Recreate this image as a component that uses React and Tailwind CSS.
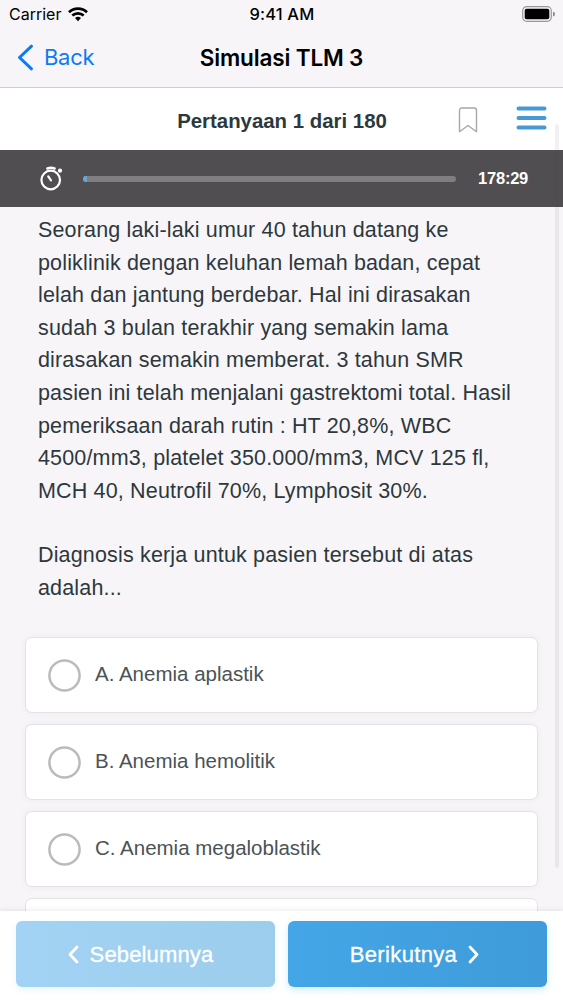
const paragraphs = [
  [
    'Seorang laki-laki umur 40 tahun datang ke',
    'poliklinik dengan keluhan lemah badan, cepat',
    'lelah dan jantung berdebar. Hal ini dirasakan',
    'sudah 3 bulan terakhir yang semakin lama',
    'dirasakan semakin memberat. 3 tahun SMR',
    'pasien ini telah menjalani gastrektomi total. Hasil',
    'pemeriksaan darah rutin : HT 20,8%, WBC',
    '4500/mm3, platelet 350.000/mm3, MCV 125 fl,',
    'MCH 40, Neutrofil 70%, Lymphosit 30%.',
  ],
  ['Diagnosis kerja untuk pasien tersebut di atas', 'adalah...'],
];

const options = ['A. Anemia aplastik', 'B. Anemia hemolitik', 'C. Anemia megaloblastik'];

function StatusBar() {
  return (
    <div className="grid h-7 grid-cols-3 items-center pl-[9px] pr-[8px] font-['Inter',sans-serif] text-[16px] text-black">
      <div className="flex items-center gap-[7px]">
        <span>Carrier</span>
        <svg width="20" height="15" viewBox="0 0 20 15" fill="none" stroke="#000" strokeWidth="2.7">
          <path d="M1 5.2C6 .3 14 .3 19 5.2" />
          <path d="M4.3 8.6C7.5 5.6 12.5 5.6 15.7 8.6" />
          <path d="M7 11.1Q10 8.5 13 11.1L10 14.2Z" fill="#000" stroke="none" />
        </svg>
      </div>
      <span className="text-center text-[16.5px] font-medium tracking-[0.150px]">9:41 AM</span>
      <svg className="justify-self-end" width="33" height="16" viewBox="0 0 33 16">
        <rect x=".7" y=".7" width="28.6" height="14.6" rx="4" fill="none" stroke="#999" strokeWidth="1.2" />
        <rect x="2.7" y="2.7" width="24.6" height="10.6" rx="2" fill="#000" />
        <path d="M31 5.5Q33 6 33 8T31 10.5Z" fill="#888" />
      </svg>
    </div>
  );
}

function NavBar() {
  return (
    <div className="grid h-[59px] grid-cols-[1fr_auto_1fr] items-center px-[17px] font-['Inter',sans-serif] text-[22px]">
      <div className="flex items-center gap-[10px] text-[#0b7bf3]">
        <svg width="17" height="27" viewBox="0 0 17 27" fill="none" stroke="currentColor" strokeWidth="3" strokeLinecap="round" strokeLinejoin="round">
          <path d="M14.5 2.2L2.5 13.5L14.5 24.8" />
        </svg>
        <span className="tracking-[-0.3px]">Back</span>
      </div>
      <h1 className="text-[22.500px] font-semibold tracking-[-0.150px] text-black">Simulasi TLM 3</h1>
      <span />
    </div>
  );
}

function QuestionHeader() {
  return (
    <div className="grid h-[62px] shrink-0 grid-cols-[1fr_auto_1fr] items-center bg-white pl-[17px] pr-[16px]">
      <span />
      <h2 className="pt-[5px] text-[20.400px] font-bold text-[#2b393d]">Pertanyaan 1 dari 180</h2>
      <div className="flex items-center justify-end gap-[38px] pb-[2px]">
        <svg className="mt-[3px]" width="20" height="26" viewBox="0 0 20 26" fill="none" stroke="#a3a8ab" strokeWidth="1.4" strokeLinejoin="round">
          <path d="M1.500 3.500Q1.500 1 4 1H16Q18.500 1 18.500 3.500V24.700L10 18.500L1.500 24.700Z" />
        </svg>
        <svg width="31" height="24" viewBox="0 0 31 24" stroke="#4799d4" strokeWidth="4" strokeLinecap="round">
          <path d="M2.500 2.500H28.500M2.500 12H28.500M2.500 21.500H28.500" />
        </svg>
      </div>
    </div>
  );
}

function Timer() {
  return (
    <div className="flex h-[57px] shrink-0 items-center bg-[#504e50] pl-[39px] pr-[35px]">
      <svg width="24" height="25" viewBox="0 0 24 25" fill="none" stroke="#fff" strokeLinecap="round">
        <circle cx="11.700" cy="14" r="9.300" strokeWidth="2.200" />
        <path d="M8.500 2.500Q12 1 15.500 2.500" strokeWidth="2.600" />
        <path d="M9.300 10.500L12 14.300" strokeWidth="2.200" />
        <circle cx="21" cy="4.700" r="2.100" fill="#fff" stroke="none" />
      </svg>
      <div className="ml-[20px] h-[6px] w-[373px] overflow-hidden rounded-full bg-[#807e80]">
        <div className="h-full w-[4px] bg-[#64a7d6]" />
      </div>
      <span className="ml-auto text-[16.500px] font-bold tracking-[-0.250px] text-white">178:29</span>
    </div>
  );
}

function Option({ label }) {
  return (
    <label className="flex h-[76px] shrink-0 items-center gap-[14px] rounded-[7px] border border-[#e4e2e6] bg-white pl-[22px] shadow-[0_0_7px_rgba(60,50,70,0.05)]">
      <svg className="mt-[2px]" width="33" height="33" viewBox="0 0 33 33" fill="none" stroke="#b9bbbc" strokeWidth="2.500">
        <circle cx="16.500" cy="16.500" r="15.100" />
      </svg>
      <span className="text-[20.500px] text-[#4a5356]">{label}</span>
    </label>
  );
}

function Chevron({ direction }) {
  return (
    <svg width="11" height="19" viewBox="0 0 11 19" fill="none" stroke="currentColor" strokeWidth="2.800" strokeLinecap="round" strokeLinejoin="round">
      <path d={direction === 'left' ? 'M9 2L2 9.500L9 17' : 'M2 2L9 9.500L2 17'} />
    </svg>
  );
}

export default function App() {
  return (
    <div className="flex h-[1000px] w-[563px] flex-col overflow-hidden bg-[#f7f5f8] font-['Liberation_Sans',sans-serif]">
      <header className="h-[88px] shrink-0 border-b border-[#cfcdd0]">
        <StatusBar />
        <NavBar />
      </header>
      <main className="relative flex h-[823px] shrink-0 flex-col overflow-hidden">
        <QuestionHeader />
        <Timer />
        <div className="shrink-0 px-[38px] pt-[7px] text-[21.500px] leading-[32.600px] tracking-[0.160px] text-[#2d383c]">
          {paragraphs.map((lines, i) => (
            <p key={i} className="mb-[32px] whitespace-nowrap">
              {lines.map((line) => (
                <span key={line} className="block">{line}</span>
              ))}
            </p>
          ))}
        </div>
        <div className="flex flex-col gap-[11px] pl-[25px] pr-[25px]">
          {options.map((label) => (
            <Option key={label} label={label} />
          ))}
          <div className="h-[76px] shrink-0 rounded-[7px] border border-[#e4e2e6] bg-white" />
        </div>
        <div className="absolute right-[4px] top-[36px] h-[744px] w-[4px] rounded-full bg-[#5a465f]/8" />
      </main>
      <footer className="z-10 flex h-[89px] shrink-0 justify-between bg-white pl-[16px] pr-[16px] pt-[10px] text-[22px] text-white shadow-[0_-1px_5px_rgba(0,0,0,0.08)]">
        <button className="flex h-[66px] w-[259px] items-center justify-center gap-[11px] rounded-[6px] bg-linear-to-r from-[#a3d3f4] to-[#9dcdec] pr-[10px] shadow-[0_3px_7px_rgba(70,180,240,0.12)] [-webkit-text-stroke:0.3px_white]">
          <Chevron direction="left" />
          <span className="tracking-[0.150px]">Sebelumnya</span>
        </button>
        <button className="flex h-[66px] w-[259px] items-center justify-center gap-[11px] rounded-[6px] bg-linear-to-r from-[#44a6e7] to-[#3f9bd9] pr-[6px] shadow-[0_3px_7px_rgba(70,180,240,0.25)] [-webkit-text-stroke:0.3px_white]">
          <span className="tracking-[0.350px]">Berikutnya</span>
          <Chevron direction="right" />
        </button>
      </footer>
    </div>
  );
}
